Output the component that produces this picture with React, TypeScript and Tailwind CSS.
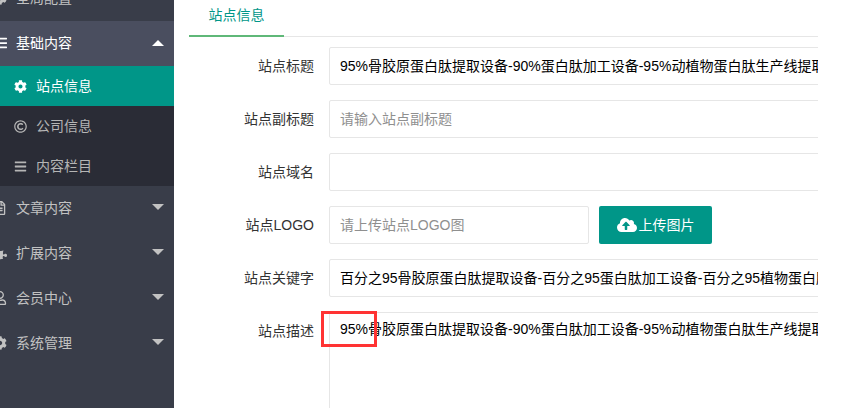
import { FaCog, FaRegCopyright, FaBars, FaCloudUploadAlt, FaRegFileAlt, FaPuzzlePiece, FaRegUser, FaListUl } from "react-icons/fa";
import type { ReactNode } from "react";

const FONT = "font-['Liberation_Sans','Noto_Sans_CJK_SC',sans-serif]";

function Top({ icon, label, open, active }: { icon: ReactNode; label: string; open?: boolean; active?: boolean }) {
  return (
    <div className={`flex h-[45px] items-center ${active ? "bg-[#4a4e5f] text-white" : "text-[#c2c2c2]"}`}>
      <div className="ml-[-12px] mr-[4px] flex w-[24px] justify-center pb-[2px] text-[14px]">{icon}</div>
      <span className="pb-[2px] text-[14px] leading-[20px]">{label}</span>
      {open ? (
        <span className="ml-auto mr-[10px] mb-[2px] h-0 w-0 border-x-[6px] border-b-[6px] border-x-transparent border-b-white" />
      ) : (
        <span className="ml-auto mr-[10px] mb-[3px] h-0 w-0 border-x-[6px] border-t-[6px] border-x-transparent border-t-[#c2c2c2]" />
      )}
    </div>
  );
}

function Sub({ icon, label, active }: { icon: ReactNode; label: string; active?: boolean }) {
  return (
    <div className={`flex h-[40px] items-center pl-[14px] text-[14px] ${active ? "bg-[#009688] text-white" : "text-[#b5b5b5]"}`}>
      <span className="flex w-[22px] text-[13px]">{icon}</span>
      <span className="leading-[20px]">{label}</span>
    </div>
  );
}

function Field({ label, children, last }: { label: string; children: ReactNode; last?: boolean }) {
  return (
    <div className={`flex ${last ? "" : "mb-[15px]"}`}>
      <label className="w-[140px] shrink-0 pr-[15px] text-right text-[14px] leading-[38px] text-[#333]">{label}</label>
      {children}
    </div>
  );
}

const inputCls = "h-[38px] shrink-0 rounded-[2px] border border-[#e6e6e6] bg-white pl-[10px] text-[14px] leading-[36px] overflow-hidden whitespace-nowrap";

export default function App() {
  return (
    <div className={`${FONT} relative flex h-[408px] w-[841px] overflow-hidden bg-white`}>
      <aside className="h-[408px] w-[174px] shrink-0 overflow-hidden bg-[#393d49]">
        <div className="mt-[-24px]">
          <Top icon={<FaCog />} label="全局配置" />
          <Top icon={<FaListUl />} label="基础内容" open active />
          <div className="bg-[#2a2c36]">
            <Sub icon={<FaCog />} label="站点信息" active />
            <Sub icon={<FaRegCopyright />} label="公司信息" />
            <Sub icon={<FaBars />} label="内容栏目" />
          </div>
          <Top icon={<FaRegFileAlt />} label="文章内容" />
          <Top icon={<FaPuzzlePiece />} label="扩展内容" />
          <Top icon={<FaRegUser />} label="会员中心" />
          <Top icon={<FaCog />} label="系统管理" />
        </div>
      </aside>
      <main className="ml-[15px] w-[629px] overflow-hidden">
        <div className="h-[37px] w-full border-b border-[#e6e6e6]">
          <div className="h-[37px] w-[95px] border-b-2 border-[#5fb878] text-center text-[14px] leading-[30px] text-[#009688]">站点信息</div>
        </div>
        <div className="mt-[10px]">
          <Field label="站点标题"><div className={`${inputCls} w-[600px] text-black`}>95%骨胶原蛋白肽提取设备-90%蛋白肽加工设备-95%动植物蛋白肽生产线提取设备</div></Field>
          <Field label="站点副标题"><div className={`${inputCls} w-[600px] text-[#8f8f8f]`}>请输入站点副标题</div></Field>
          <Field label="站点域名"><div className={`${inputCls} w-[600px]`} /></Field>
          <Field label="站点LOGO">
            <div className={`${inputCls} w-[260px] text-[#8f8f8f]`}>请上传站点LOGO图</div>
            <button className="ml-[10px] flex h-[38px] w-[113px] items-center justify-center rounded-[2px] bg-[#009688] text-[14px] text-white">
              <FaCloudUploadAlt size={20} className="mr-[2px]" />上传图片
            </button>
          </Field>
          <Field label="站点关键字"><div className={`${inputCls} w-[600px] text-black`}>百分之95骨胶原蛋白肽提取设备-百分之95蛋白肽加工设备-百分之95植物蛋白肽生产线</div></Field>
          <Field label="站点描述" last>
            <div className="h-[200px] w-[600px] shrink-0 overflow-hidden whitespace-nowrap rounded-[2px] border border-[#e6e6e6] pl-[10px] pt-[6px] text-[14px] leading-[20px] text-black">95%骨胶原蛋白肽提取设备-90%蛋白肽加工设备-95%动植物蛋白肽生产线提取设备</div>
          </Field>
        </div>
      </main>
      <div className="absolute left-[321px] top-[311px] h-[36px] w-[56px] border-[3px] border-[#f33]" />
    </div>
  );
}
